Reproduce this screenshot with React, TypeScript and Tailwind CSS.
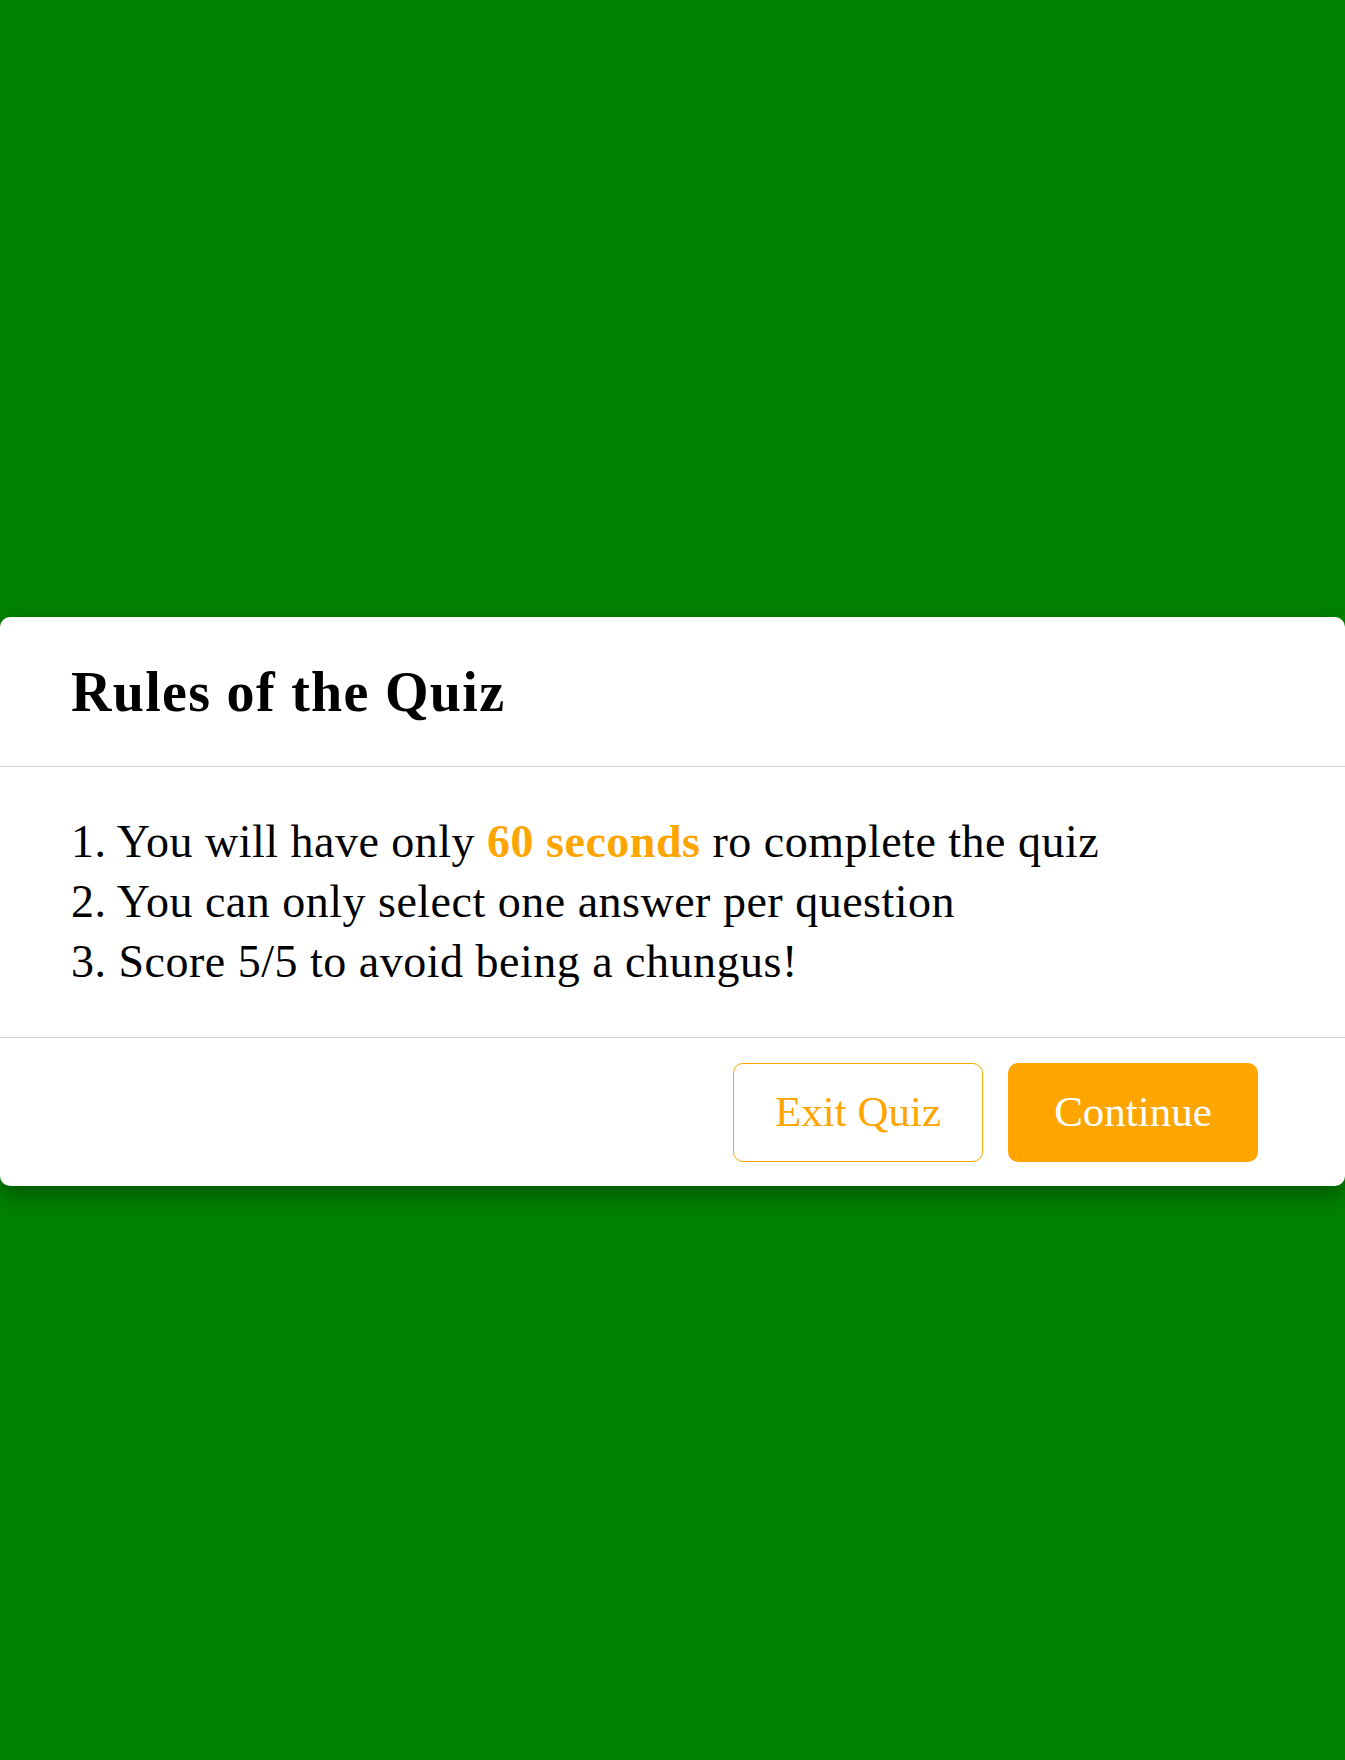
export default function App() {
  return (
    <div className="min-h-[1760px] bg-[#008000] pt-[617px] font-['Liberation_Serif',serif]">
      <div className="rounded-[10px] bg-white shadow-[0_10px_20px_rgba(0,0,0,0.3)]">
        <div className="flex h-[150px] items-center border-b border-[#d6d6d6] px-[71px]">
          <h1 className="text-[56px] font-bold leading-none tracking-[1.3px] text-black">Rules of the Quiz</h1>
        </div>
        <div className="border-b border-[#d6d6d6] px-[71px] py-[45px] text-[46px] leading-[60px] tracking-[0.5px] text-black">
          <p>
            1. You will have only <span className="font-bold text-[#ffa500]">60 seconds</span> ro complete the quiz
          </p>
          <p>2. You can only select one answer per question</p>
          <p>3. Score 5/5 to avoid being a chungus!</p>
        </div>
        <div className="flex justify-end gap-[25px] pb-[24px] pr-[87px] pt-[25px]">
          <button className="flex h-[99px] w-[250px] items-center justify-center rounded-[10px] border border-[#ffa500] bg-white text-[43px] text-[#ffa500]">
            Exit Quiz
          </button>
          <button className="flex h-[99px] w-[250px] items-center justify-center rounded-[10px] bg-[#ffa500] text-[43px] text-white">
            Continue
          </button>
        </div>
      </div>
    </div>
  )
}
